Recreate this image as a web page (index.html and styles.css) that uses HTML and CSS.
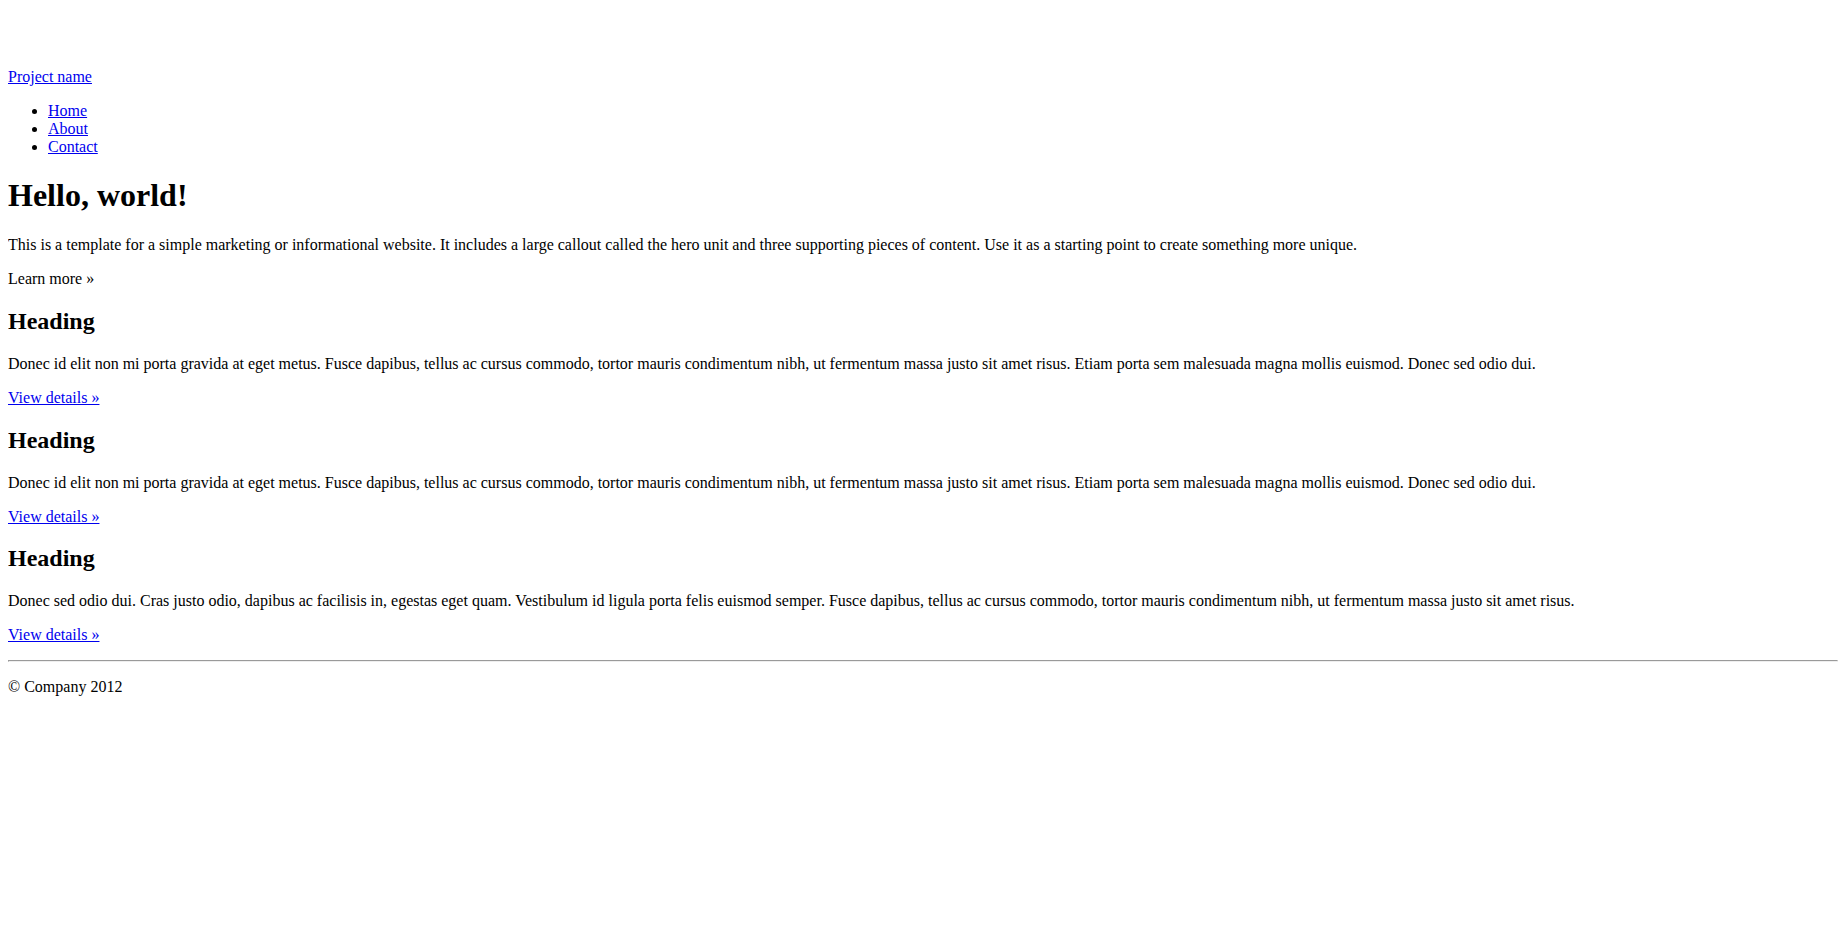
FILE: index.html
```html
<!DOCTYPE html>
<html lang="en">
<head>
    <meta charset="utf-8">
    <title>Bootstrap, from Twitter</title>
    <meta name="viewport" content="width=device-width, initial-scale=1.0">
    <link rel="stylesheet" href="styles.css">
</head>
<body>
    <div class="navbar">
        <div class="navbar-inner">
            <div class="container">
                <a class="brand" href="#">Project name</a>
                <div class="nav-collapse">
                    <ul class="nav">
                        <li class="active"><a href="#">Home</a></li>
                        <li><a href="#about">About</a></li>
                        <li><a href="#contact">Contact</a></li>
                    </ul>
                </div>
            </div>
        </div>
    </div>

    <div class="container">
        <!-- Main hero unit -->
        <div class="hero-unit">
            <h1>Hello, world!</h1>
            <p>This is a template for a simple marketing or informational website. It includes a large callout called the hero unit and three supporting pieces of content. Use it as a starting point to create something more unique.</p>
            <p><span class="btn">Learn more &raquo;</span></p>
        </div>

        <div class="row">
            <div class="span4">
                <h2>Heading</h2>
                <p>Donec id elit non mi porta gravida at eget metus. Fusce dapibus, tellus ac cursus commodo, tortor mauris condimentum nibh, ut fermentum massa justo sit amet risus. Etiam porta sem malesuada magna mollis euismod. Donec sed odio dui.</p>
                <p><a href="#">View details &raquo;</a></p>
            </div>
            <div class="span4">
                <h2>Heading</h2>
                <p>Donec id elit non mi porta gravida at eget metus. Fusce dapibus, tellus ac cursus commodo, tortor mauris condimentum nibh, ut fermentum massa justo sit amet risus. Etiam porta sem malesuada magna mollis euismod. Donec sed odio dui.</p>
                <p><a href="#">View details &raquo;</a></p>
            </div>
            <div class="span4">
                <h2>Heading</h2>
                <p>Donec sed odio dui. Cras justo odio, dapibus ac facilisis in, egestas eget quam. Vestibulum id ligula porta felis euismod semper. Fusce dapibus, tellus ac cursus commodo, tortor mauris condimentum nibh, ut fermentum massa justo sit amet risus.</p>
                <p><a href="#">View details &raquo;</a></p>
            </div>
        </div>

        <hr>

        <footer>
            <p>&copy; Company 2012</p>
        </footer>
    </div>
</body>
</html>
```

FILE: styles.css
```css
body {
    padding-top: 60px;
    padding-bottom: 40px;
    font-family: "Liberation Serif", serif;
    font-size: 16px;
    color: #000;
}

a {
    color: #0000ee;
}
```
